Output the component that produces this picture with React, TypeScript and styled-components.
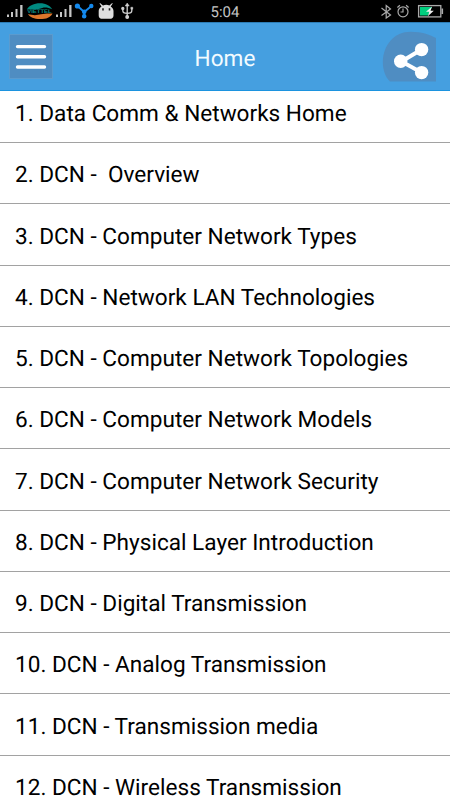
import React from "react";
import styled, { createGlobalStyle } from "styled-components";

const GlobalStyle = createGlobalStyle`
  * { box-sizing: border-box; }
  body {
    margin: 0;
    background: #fff;
    font-family: Roboto, "Noto Sans", sans-serif;
    text-rendering: geometricPrecision;
  }
`;

const Screen = styled.div`
  display: flex;
  flex-direction: column;
  width: 450px;
  height: 800px;
  overflow: hidden;
  background: #fff;
`;

const StatusBar = styled.header`
  display: grid;
  grid-template-columns: 1fr 50px 1fr;
  flex: none;
  height: 22px;
  background: #000;
`;

const StatusIcons = styled.div<{ $end?: boolean }>`
  display: flex;
  justify-content: ${(p) => (p.$end ? "flex-end" : "flex-start")};
  svg { display: block; }
`;

const Clock = styled.time`
  font-size: 15px;
  line-height: 24px;
  text-align: center;
  color: #c4c4c4;
`;

const TitleBar = styled.div`
  display: grid;
  grid-template-columns: 54px 1fr 54px;
  align-items: start;
  flex: none;
  height: 69px;
  padding-top: 8px;
  background: #459fe0;
  border-top: 1px solid #2c7cb5;
  border-bottom: 1px solid #1c93df;
`;

const Title = styled.h1`
  margin: 0;
  padding-top: 13px;
  font-size: 22.6px;
  font-weight: 400;
  line-height: 30px;
  text-align: center;
  color: #f2fbff;
`;

const MenuButton = styled.button`
  width: 44px;
  height: 45px;
  margin: 3px 0 0 9px;
  padding: 0;
  border: 1px solid #5b9bce;
  background: #4f8dc2;
  svg { display: block; }
`;

const ShareButton = styled.button`
  width: 54px;
  height: 51px;
  margin: 0 0 0 -14px;
  padding: 0;
  border: 0;
  background: none;
  svg { display: block; }
`;

const Viewport = styled.main`
  flex: 1;
  min-height: 0;
  overflow: hidden;
`;

const TopicList = styled.ol`
  margin: -9.3px 0 0;
  padding: 0;
  list-style: none;
`;

const Topic = styled.li`
  height: 61.27px;
  padding: 17.4px 15px 0;
  border-bottom: 1px solid #a2a2a2;
  font-size: 22.6px;
  line-height: 30px;
  white-space: pre;
  color: #000;
`;

const topics = [
  "Data Comm & Networks Home",
  "DCN -  Overview",
  "DCN - Computer Network Types",
  "DCN - Network LAN Technologies",
  "DCN - Computer Network Topologies",
  "DCN - Computer Network Models",
  "DCN - Computer Network Security",
  "DCN - Physical Layer Introduction",
  "DCN - Digital Transmission",
  "DCN - Analog Transmission",
  "DCN - Transmission media",
  "DCN - Wireless Transmission",
];

const CarrierText = styled.text`
  font: 700 5px "Liberation Sans", sans-serif;
  fill: #0a8d83;
`;

const Signal = ({ x }: { x: number }) => (
  <g transform={`translate(${x} 0)`} fill="#c6c6c6">
    <rect x="0" y="14.5" width="2" height="2.5" />
    <rect x="4" y="12" width="2" height="5" />
    <rect x="8.5" y="9" width="2" height="8" />
    <rect x="13.2" y="5" width="2.3" height="12" />
  </g>
);

const LeftIcons = () => (
  <svg width="150" height="22" viewBox="0 0 150 22">
    <Signal x={7} />
    <path d="M27 9.2C29 5.6 34 3.2 40 3.2c6 0 10 2.4 12.2 6-4-1.6-7-2.2-10-1.3-5 1.6-9 2.1-15.2 1.3Z" fill="#008a80" />
    <path d="M28 14c5 1.6 9 1.3 13 .3 4-1 7-.9 11.5-.8-2 4-6 5.6-12.5 5.6-6 0-10-1.8-12-5.1Z" fill="#dc762b" />
    <CarrierText x="27.2" y="13.2" textLength="24.5" lengthAdjust="spacingAndGlyphs">VIETTEL</CarrierText>
    <Signal x={56} />
    <g stroke="#1489ed" strokeWidth="2" fill="#1489ed">
      <path d="m77.5 6 6.7 6 7.3-6M84.2 12v4.5" fill="none" />
      <circle cx="77.4" cy="6" r="1.6" />
      <circle cx="91.3" cy="6" r="1.2" />
      <circle cx="84.2" cy="11.8" r="1.3" />
      <circle cx="84.2" cy="16.2" r="1.3" />
    </g>
    <path d="m100 3 3 2.4c2-.8 4.5-.8 6.4 0L112.2 3l.5.5-2 3c1.8 1.1 2.8 2.7 2.8 4.5v4.5c0 2.5-1.4 3.3-4 3.3h-6.8c-2.6 0-4-.8-4-3.3V11c0-1.8 1-3.4 2.8-4.5l-2-3Z" fill="#dedede" />
    <path d="M103 8.2v2.2M109.5 8.2v2.2" stroke="#222" strokeWidth="1.6" />
    <g stroke="#d0d0d0" fill="none" strokeWidth="1.3">
      <path d="M127.2 5v12M122.8 8v2.8c0 1.8 1.7 2.6 4.4 2.6 2.8 0 4.6-.8 4.6-2.6V8" />
      <path d="m125.2 6 2-3 2 3Z" fill="#d0d0d0" strokeWidth=".5" />
      <circle cx="122.8" cy="8.4" r="1" fill="#d0d0d0" />
      <path d="M130.8 7.2h2v2h-2z" fill="#d0d0d0" strokeWidth=".4" />
      <circle cx="127.2" cy="17" r="1.3" fill="#d0d0d0" />
    </g>
  </svg>
);

const RightIcons = () => (
  <svg width="80" height="22" viewBox="0 0 80 22">
    <g stroke="#aaa" fill="none" strokeWidth="1.2">
      <path d="m11.5 8 9 7-4.3 3V5.6L20.5 9l-9 6.5" />
      <circle cx="33" cy="11.8" r="5" />
      <path d="M33 8.5V12h-2.5M27.4 7.5l2.5-2.3M38.6 7.5l-2.5-2.3" />
      <rect x="48.6" y="5.6" width="22.2" height="11.3" strokeWidth="1.3" />
      <path d="M72.3 8.5v5.5" strokeWidth="1.6" />
    </g>
    <path d="M50 7h12l-4 8.5h-8Z" fill="#00ce7e" />
    <path d="m62 6.4-6 5.3h3.3l-1.5 4.5 6-5.5h-3.3Z" fill="#eee" />
  </svg>
);

const MenuIcon = () => (
  <svg width="42" height="43" viewBox="0 0 42 43">
    <path d="M7.5 11.6h27M7.5 21.8h27M7.5 32h27" stroke="#fff" strokeWidth="3.4" strokeLinecap="round" />
  </svg>
);

const ShareIcon = () => (
  <svg width="54" height="51" viewBox="0 0 54 51">
    <path d="M54 7v43.5H8C3.5 46.5.8 39 .8 31 .8 14 12.5.7 28.5.7 40 .7 47 3.5 54 7Z" fill="#4f8dc2" />
    <path d="m39.5 18.5-20 12 20 11" fill="none" stroke="#fff" strokeWidth="4" />
    <circle cx="39.6" cy="18.6" r="6.7" fill="#fff" />
    <circle cx="18.7" cy="30.3" r="6.7" fill="#fff" />
    <circle cx="39.6" cy="41.6" r="6.7" fill="#fff" />
  </svg>
);

export default function App() {
  return (
    <Screen>
      <GlobalStyle />
      <StatusBar>
        <StatusIcons><LeftIcons /></StatusIcons>
        <Clock>5:04</Clock>
        <StatusIcons $end><RightIcons /></StatusIcons>
      </StatusBar>
      <TitleBar>
        <MenuButton aria-label="Menu"><MenuIcon /></MenuButton>
        <Title>Home</Title>
        <ShareButton aria-label="Share"><ShareIcon /></ShareButton>
      </TitleBar>
      <Viewport>
        <TopicList>
          {topics.map((topic, i) => (
            <Topic key={topic}>{`${i + 1}. ${topic}`}</Topic>
          ))}
        </TopicList>
      </Viewport>
    </Screen>
  );
}
